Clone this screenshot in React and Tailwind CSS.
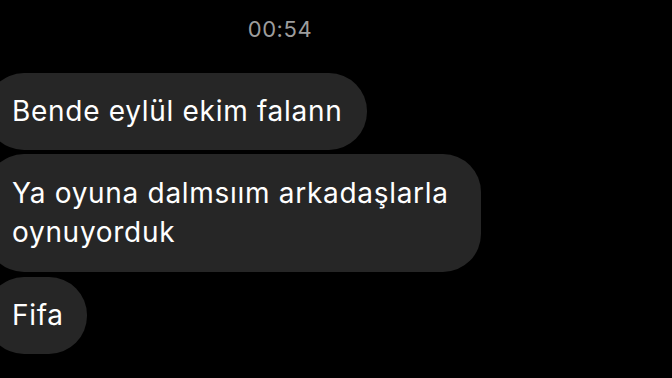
export default function App() {
  const bubble =
    "bg-[#262626] text-white rounded-[38px] pl-[26px] py-[19px] text-[28px] leading-[39px] tracking-[0.7px]";
  return (
    <div className="w-[672px] h-[378px] bg-black overflow-hidden font-['Inter','Liberation_Sans',sans-serif]">
      <div className="w-[560px] pt-[16px] text-center text-[22px] leading-[26px] tracking-[0.6px] text-[#9d9d9d]">
        00:54
      </div>
      <div className="mt-[31px] -ml-[14px] flex flex-col items-start">
        <div className={`${bubble} pr-[25px]`}>Bende eylül ekim falann</div>
        <div className={`${bubble} mt-[4px] w-[495px] pr-[30px] py-[20px]`}>
          Ya oyuna dalmsıım arkadaşlarla oynuyorduk
        </div>
        <div className={`${bubble} mt-[5px] pr-[23px]`}>Fifa</div>
      </div>
    </div>
  );
}
